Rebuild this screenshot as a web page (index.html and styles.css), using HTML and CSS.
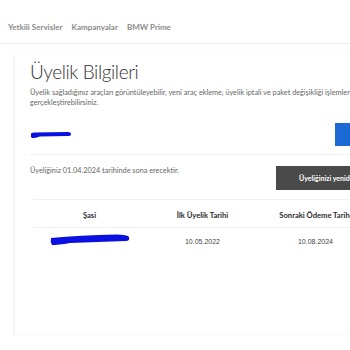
FILE: index.html
```html
<!DOCTYPE html>
<html lang="tr">
<head>
  <meta charset="UTF-8" />
  <meta name="viewport" content="width=device-width, initial-scale=1" />
  <title>Üyelik Bilgileri</title>
  <link rel="stylesheet" href="styles.css">
</head>
<body>

<header class="topnav">
  <a href="#">Yetkili Servisler</a>
  <a href="#">Kampanyalar</a>
  <a href="#">BMW Prime</a>
</header>

<main class="card">
  <h1>Üyelik Bilgileri</h1>
  <p class="desc">Üyelik sağladığınız araçları görüntüleyebilir, yeni araç ekleme, üyelik iptali ve paket değişikliği işlemleri<br>gerçekleştirebilirsiniz.</p>

  <div class="vehicle-row">
    <!-- plate number scribbled out -->
    <svg class="scribble" width="42" height="8" viewBox="0 0 42 8">
      <path d="M1 3 Q 1 1.5 4 1.5 L 38 1 Q 41 1 41 3 Q 41 5 38 5 L 10 5.5 Q 4 7.5 2 7 Q 0.5 6 1 3 Z" fill="#0a10e0"/>
    </svg>
    <button class="btn-blue" aria-label="Araç ekle"></button>
  </div>

  <div class="expiry-row">
    <span>Üyeliğiniz 01.04.2024 tarihinde sona erecektir.</span>
    <button class="btn-dark">Üyeliğinizi yenideyin</button>
  </div>

  <table class="members">
    <thead>
      <tr>
        <th>Şasi</th>
        <th>İlk Üyelik Tarihi</th>
        <th>Sonraki Ödeme Tarihi</th>
      </tr>
    </thead>
    <tbody>
      <tr>
        <td>
          <svg class="scribble" width="80" height="12" viewBox="0 0 80 12">
            <path d="M1 4 Q 30 1 66 0.5 Q 78 0.5 79 3 Q 80 7 76 7 L 20 9 Q 8 11 2 11 Q 0 8 1 4 Z" fill="#0a10e0"/>
          </svg>
        </td>
        <td>10.05.2022</td>
        <td>10.08.2024</td>
      </tr>
    </tbody>
  </table>
</main>

</body>
</html>
```

FILE: styles.css
```css
body {
  font-family: Lato, "Noto Sans", sans-serif;
  background: #fff;
  margin: 0;
  width: 350px;
  height: 350px;
  overflow: hidden;
}
.topnav {
  display: flex;
  gap: 9px;
  padding: 22px 8px 10px;
  border-bottom: 1px solid #ececec;
}
.topnav a {
  font-size: 8px;
  font-weight: bold;
  color: #8a8a8a;
  text-decoration: none;
  line-height: 11px;
}
.card {
  width: 371px;
  height: 275px;
  margin: 11px 0 0 14px;
  padding: 5px 15px 0;
  box-shadow: -1px 0 2px rgba(0,0,0,0.05);
  border-left: 1px solid #f3f3f3;
}
h1 {
  margin: 0;
  font-size: 19px;
  font-weight: 300;
  letter-spacing: -0.4px;
  color: #333;
  line-height: 24px;
}
.desc {
  margin: 4px 0 0;
  font-size: 7.3px;
  line-height: 10px;
  color: #666;
  white-space: nowrap;
}
.vehicle-row {
  display: flex;
  justify-content: space-between;
  align-items: center;
  margin-top: 15px;
  padding-bottom: 8px;
  border-bottom: 1px solid #f0f0f0;
}
.vehicle-row .scribble {
  display: block;
}
.btn-blue {
  width: 66px;
  height: 23px;
  border: none;
  background: #1c69d4;
}
.expiry-row {
  display: flex;
  justify-content: space-between;
  align-items: flex-start;
  padding: 11px 0 9px 0;
  font-size: 7.3px;
  line-height: 10px;
  color: #666;
}
.btn-dark {
  width: 125px;
  height: 24px;
  border: none;
  background: #4a4a4a;
  color: #fff;
  font-family: inherit;
  font-size: 7px;
  font-weight: bold;
  text-align: left;
  padding-left: 23px;
}
.members {
  margin-left: 3px;
  width: 339px;
  border-collapse: collapse;
  table-layout: fixed;
  border-top: 1px solid #f0f0f0;
}
.members th {
  font-size: 7.6px;
  font-weight: bold;
  color: #2b2b2b;
  height: 24px;
  padding: 3px 0 0;
  border-bottom: 1px solid #f0f0f0;
  white-space: nowrap;
}
.members td {
  font-family: "Liberation Sans", Arial, sans-serif;
  font-size: 7px;
  line-height: 10px;
  color: #444;
  text-align: center;
  padding: 9px 0 0;
}
.members td .scribble {
  display: block;
  margin: -5px 0 0 17px;
}
```
